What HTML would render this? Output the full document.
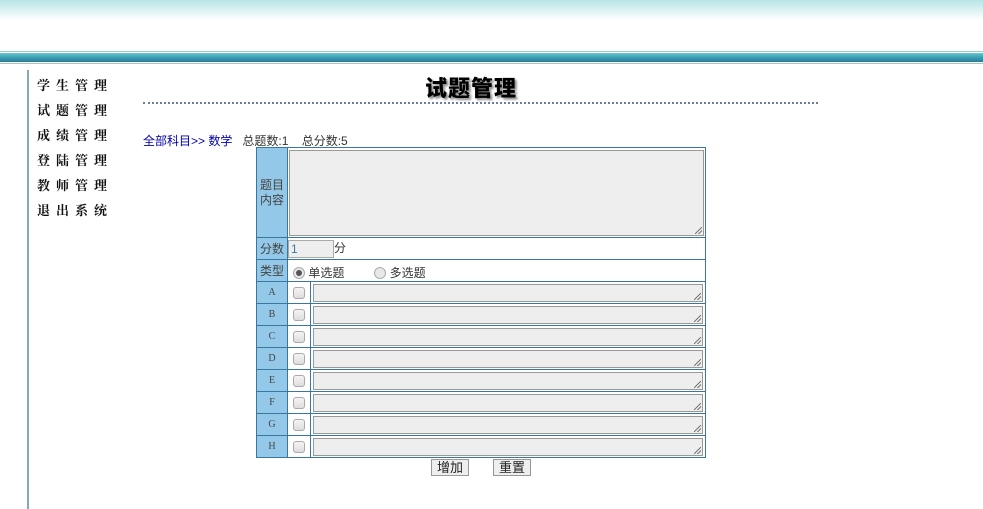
<!DOCTYPE html>
<html><head><meta charset="utf-8"><style>
*{margin:0;padding:0;box-sizing:border-box}
body{width:983px;height:509px;background:#fff;position:relative;overflow:hidden;font-family:"Liberation Sans","Noto Sans CJK SC",sans-serif;font-size:12px;color:#333}
.a{position:absolute}
.top{left:0;top:0;width:983px;height:20px;background:linear-gradient(#b6e4e6,#fff)}
.band{left:0;top:51px;width:983px;height:13px;border-top:1px solid #9cc;border-bottom:1px solid #9cc;background:linear-gradient(#7dd0d3,#3aa6b6 45%,#2e6f94);background-clip:content-box;padding:1px 0}
.vl{left:27px;top:70px;width:2px;height:439px;background:#8aa}
.menu{left:37px;top:72px;font-family:"Noto Serif CJK SC",serif;font-weight:bold;font-size:13px;line-height:25px;letter-spacing:6px;color:#111}
.title{left:425px;top:71px;font-size:22px;font-weight:900;color:#000;text-shadow:2px 2px 2px #888;letter-spacing:1px}
.dot{left:143px;top:102px;width:675px;border-top:2px dotted #6a7f9a}
.crumb{left:143px;top:132px;font-size:12px}
.crumb b{font-weight:normal;color:#00a}
table{position:absolute;left:256px;top:147px;width:450px;border-collapse:collapse}
td{border:1px solid #3a77a0;padding:0;height:22px}
td.l{background:#94c8e8;width:31px;text-align:center;color:#444;font-size:12px}
td.l.s{font-family:"Liberation Serif",serif;font-size:10px}
td.c{width:23px;text-align:center}
.cb{display:inline-block;width:12px;height:12px;border:1px solid #aaa;border-radius:3px;background:linear-gradient(#f4f4f4,#ddd);vertical-align:middle}
.ta{display:block;height:18px;margin:1px 2px;border:1px solid #999;background:#eee;position:relative}
.ta:after{content:"";position:absolute;right:1px;bottom:1px;width:7px;height:7px;background:linear-gradient(135deg,transparent 45%,#777 45%,#777 55%,transparent 55%,transparent 70%,#777 70%,#777 80%,transparent 80%)}
.rd{display:inline-block;width:12px;height:12px;border:1px solid #aaa;border-radius:50%;background:#e8e8e8;vertical-align:-2px;position:relative}
.btn{border:1px solid #999;background:#eee;height:17px;font-size:13px;line-height:15px;text-align:center;color:#222}
</style></head><body>
<div class="a top"></div>
<div class="a band"></div>
<div class="a vl"></div>
<div class="a menu">学生管理<br>试题管理<br>成绩管理<br>登陆管理<br>教师管理<br>退出系统</div>
<div class="a title">试题管理</div>
<div class="a dot"></div>
<div class="a crumb"><b>全部科目&gt;&gt; 数学</b>&nbsp;&nbsp;&nbsp;总题数:1&nbsp;&nbsp;&nbsp;&nbsp;总分数:5</div>
<table>
<tr><td class="l" style="height:90px;line-height:15px">题目<br>内容</td><td colspan="2"><span class="ta" style="height:86px;margin:1px"></span></td></tr>
<tr><td class="l">分数</td><td colspan="2"><span style="display:inline-block;width:46px;height:18px;border:1px solid #aaa;background:#eee;vertical-align:middle;color:#47a;padding-left:2px;line-height:16px">1</span>分</td></tr>
<tr><td class="l">类型</td><td colspan="2" style="padding-left:5px;padding-top:3px"><span class="rd"><span style="position:absolute;left:2px;top:2px;width:6px;height:6px;border-radius:50%;background:#555"></span></span> 单选题<span style="display:inline-block;width:30px"></span><span class="rd"></span> 多选题</td></tr>
<tr><td class="l s">A</td><td class="c"><span class="cb"></span></td><td><span class="ta"></span></td></tr>
<tr><td class="l s">B</td><td class="c"><span class="cb"></span></td><td><span class="ta"></span></td></tr>
<tr><td class="l s">C</td><td class="c"><span class="cb"></span></td><td><span class="ta"></span></td></tr>
<tr><td class="l s">D</td><td class="c"><span class="cb"></span></td><td><span class="ta"></span></td></tr>
<tr><td class="l s">E</td><td class="c"><span class="cb"></span></td><td><span class="ta"></span></td></tr>
<tr><td class="l s">F</td><td class="c"><span class="cb"></span></td><td><span class="ta"></span></td></tr>
<tr><td class="l s">G</td><td class="c"><span class="cb"></span></td><td><span class="ta"></span></td></tr>
<tr><td class="l s">H</td><td class="c"><span class="cb"></span></td><td><span class="ta"></span></td></tr>
</table>
<div class="a btn" style="left:431px;top:459px;width:38px">增加</div>
<div class="a btn" style="left:493px;top:459px;width:38px">重置</div>
</body></html>
